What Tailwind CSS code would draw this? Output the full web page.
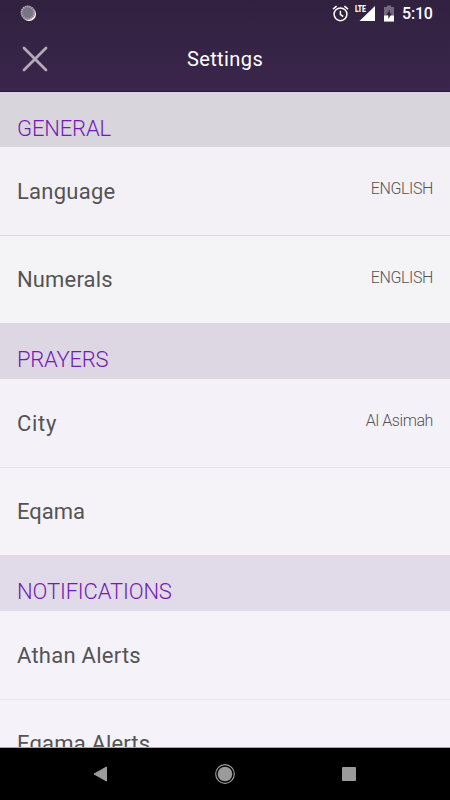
<!DOCTYPE html>
<html lang="en">
<head>
  <meta charset="UTF-8" />
  <title>Settings</title>
  <meta name="viewport" content="width=device-width, initial-scale=1.0" />
  <script src="https://cdn.jsdelivr.net/npm/@tailwindcss/browser@4"></script>
</head>
<body class="h-[800px] w-[450px] flex flex-col overflow-hidden bg-black font-['Roboto',sans-serif]">

  <!-- Status bar + title -->
  <header class="h-[92px] shrink-0 bg-linear-to-b from-[#31213f] to-[#3a264c] border-b border-[#2d1742]">
    <div class="h-[27px] flex items-center pl-5 pr-[17px]">
      <svg class="size-4 -mt-0.5" viewBox="0 0 16 16">
        <circle cx="9" cy="9" r="7" fill="#fff" />
        <circle cx="7.8" cy="7.7" r="7.2" fill="#7c7286" />
        <circle cx="7.8" cy="7.7" r="6.2" fill="none" stroke="#b7b0bd" stroke-width="1.8" stroke-dasharray="1 1.16" />
      </svg>
      <svg class="ml-auto w-[17px] h-[17px]" viewBox="0 0 17 17" fill="none" stroke="#fff" stroke-width="1.5">
        <circle cx="8.5" cy="9.3" r="6.4" />
        <path d="M8.4 5.7v4l2.8 1.8M1 4.2l3.6-3M16 4.2l-3.6-3" />
      </svg>
      <div class="relative ml-1.5 w-[21px] h-[17px]">
        <svg class="w-[21px] h-[17px]" viewBox="0 0 21 17">
          <path d="M20 1v15H4.5z" fill="#fff" />
          <path d="M0 0h11v8H0z" fill="#33223f" />
        </svg>
        <span class="absolute left-0 top-0 origin-left scale-x-75 text-[9px] leading-[9px] font-black tracking-[-0.2px] text-white">LTE</span>
      </div>
      <svg class="ml-2 w-[10px] h-[17px]" viewBox="0 0 10 17">
        <path d="M3 .5h4V2h3v14.5H0V2h3z" fill="#75697f" />
        <path d="M0 10.5h10v6H0z" fill="#fff" />
        <path d="M5.8 4.5v4h2L4.3 14v-4h-2z" fill="#33223f" />
      </svg>
      <span class="ml-2 mt-px w-[31px] text-base leading-4 font-medium tracking-[-0.2px] text-white whitespace-nowrap">5:10</span>
    </div>
    <div class="h-16 grid grid-cols-3 items-center">
      <svg class="ml-[22px] size-[26px]" viewBox="0 0 26 26" fill="none" stroke="#b2a9b9" stroke-width="2.8" stroke-linecap="round">
        <path d="M2 2l22 22M24 2L2 24" />
      </svg>
      <h1 class="text-center text-xl tracking-[0.4px] text-white">Settings</h1>
    </div>
  </header>

  <!-- Settings list -->
  <main class="h-[656px] shrink-0 overflow-hidden text-[22px] leading-[26px] text-[#545355] border-b border-[#aaa8ad]">
    <h2 class="h-[55px] pl-[17px] pt-6 bg-[#d8d5dc] font-light tracking-[-0.15px] text-[#741bb3]">GENERAL</h2>
    <div class="h-[89px] flex justify-between px-[17px] pt-8 bg-[#f3f1f5] border-b border-[#dbdae2]">
      <span class="tracking-[0.25px]">Language</span>
      <span class="-mt-0.5 text-base leading-6 font-light tracking-[-0.4px]">ENGLISH</span>
    </div>
    <div class="h-[87px] flex justify-between px-[17px] pt-[31px] bg-[#f4f3f6]">
      <span class="tracking-[0.15px]">Numerals</span>
      <span class="-mt-px text-base leading-6 font-light tracking-[-0.4px]">ENGLISH</span>
    </div>

    <h2 class="h-14 pl-[17px] pt-6 bg-[#ddd7e3] font-light tracking-[-0.25px] text-[#741bb3]">PRAYERS</h2>
    <div class="h-[89px] flex justify-between px-[17px] pt-8 bg-[#f4f2f8] border-b border-[#e5e3e9]">
      <span class="tracking-[0.7px]">City</span>
      <span class="-mt-0.5 text-base leading-6 font-light tracking-[-0.4px]">Al Asimah</span>
    </div>
    <div class="h-[87px] pl-[17px] pt-[31px] bg-[#f5f3f8]">
      <span>Eqama</span>
    </div>

    <h2 class="h-14 pl-[17px] pt-6 bg-[#e1dae9] font-light tracking-[-0.15px] text-[#741bb3]">NOTIFICATIONS</h2>
    <div class="h-[89px] pl-[17px] pt-8 bg-[#f5f3f9] border-b border-[#e9e6f0]">
      <span class="tracking-[0.25px]">Athan Alerts</span>
    </div>
    <div class="h-22 pl-[17px] pt-[31px] bg-[#f5f3f9]">
      <span class="tracking-[0.15px]">Eqama Alerts</span>
    </div>
  </main>

  <!-- Navigation bar -->
  <nav class="h-[52px] shrink-0 flex items-center pl-[93px] bg-black">
    <svg class="w-[15px] h-4" viewBox="0 0 15 16"><path d="M1 8L13.5 1v14z" fill="#9b9b9b" stroke="#9b9b9b" stroke-linejoin="round" /></svg>
    <svg class="ml-[106px] size-[22px]" viewBox="0 0 22 22">
      <circle cx="11" cy="11" r="9.3" fill="none" stroke="#9b9b9b" stroke-width="1.2" />
      <circle cx="11" cy="11" r="7.3" fill="#9b9b9b" />
    </svg>
    <div class="ml-[106px] size-[14px] rounded-[1px] bg-[#9b9b9b]"></div>
  </nav>
</body>
</html>
